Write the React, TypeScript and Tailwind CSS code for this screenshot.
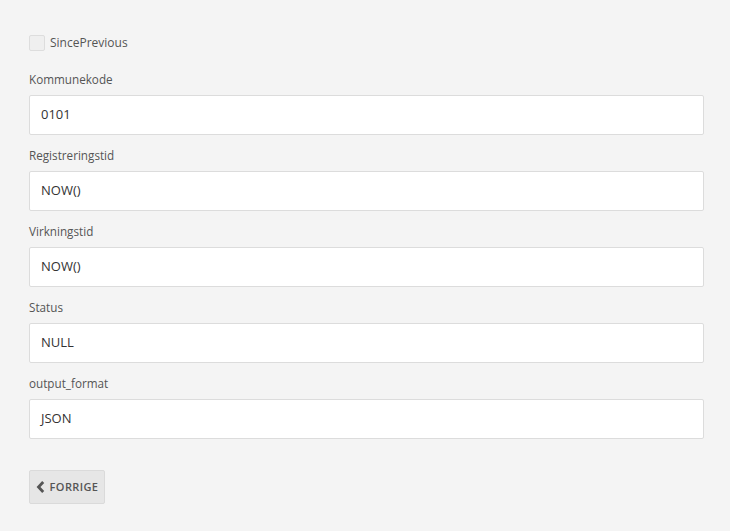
const fields = [
  { label: "Kommunekode", value: "0101" },
  { label: "Registreringstid", value: "NOW()" },
  { label: "Virkningstid", value: "NOW()" },
  { label: "Status", value: "NULL" },
  { label: "output_format", value: "JSON" },
];

export default function App() {
  return (
    <div
      className="w-[730px] h-[531px] bg-[#f4f4f4] pl-[29px] pr-[26px] pt-[33px]"
      style={{ fontFamily: '"Open Sans", "Liberation Sans", sans-serif' }}
    >
      <label className="flex items-center h-5 mb-[16px] gap-[5px]">
        <span className="w-4 h-4 rounded-[2px] border border-[#ddd] bg-[#efefef]" />
        <span className="text-[12px] text-[#555]">SincePrevious</span>
      </label>

      {fields.map((f) => (
        <div key={f.label} className="mb-[10px]">
          <div className="h-5 leading-5 mb-[6px] text-[11.7px] text-[#555]">
            {f.label}
          </div>
          <div className="h-10 bg-white border border-[#dcdcdc] rounded-[2px] flex items-center px-[11px] text-[13px] text-[#333]">
            {f.value}
          </div>
        </div>
      ))}

      <button className="mt-[31px] h-[34px] w-[76px] flex items-center justify-center gap-[4px] bg-[#e6e6e6] border border-[#dadada] rounded-[2px] text-[#555] text-[11px] font-semibold tracking-[0.4px]">
        <svg width="9" height="12" viewBox="0 0 9 12" className="mr-[1px]">
          <path d="M7.2 1 L2.5 6 L7.2 11" fill="none" stroke="#555" strokeWidth="2.8" />
        </svg>
        FORRIGE
      </button>
    </div>
  );
}
